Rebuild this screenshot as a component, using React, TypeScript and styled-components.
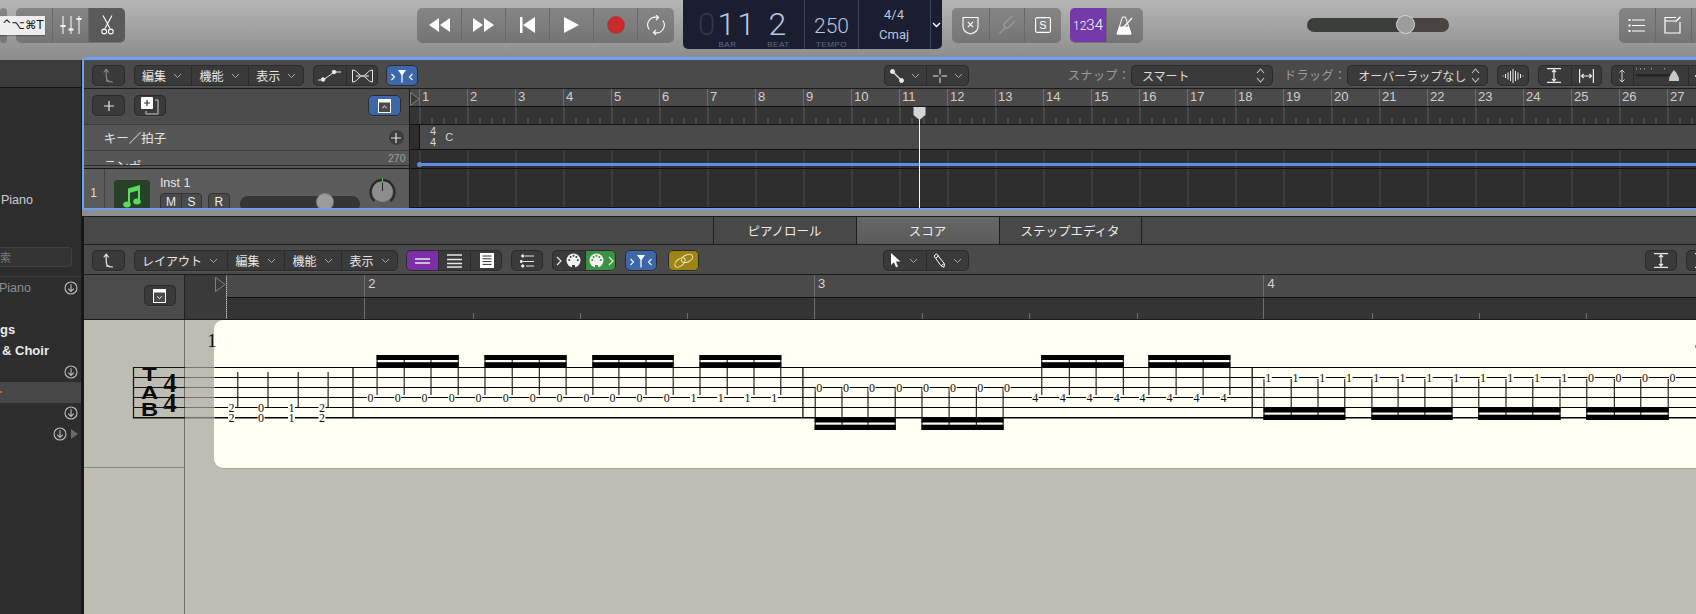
import React from "react";
import styled, { createGlobalStyle } from "styled-components";

const GlobalStyle = createGlobalStyle`
  html, body { margin: 0; padding: 0; background: #2e2e2e; }
  body { font-family: "Liberation Sans", "Noto Sans CJK JP", sans-serif; overflow: hidden; }
  * { box-sizing: border-box; }
`;

const JP = `"Noto Sans CJK JP", "Liberation Sans", sans-serif`;

const Page = styled.div`
  width: 1696px;
  height: 614px;
  position: relative;
  overflow: hidden;
  display: flex;
  flex-direction: column;
`;

/* ---------- top toolbar ---------- */
const TopBar = styled.div`
  height: 57px;
  flex: none;
  display: flex;
  align-items: flex-start;
  overflow: hidden;
  background: linear-gradient(#b6b6b6, #8d8d8d);
`;

const TopGroup = styled.div<{ $ml?: number }>`
  display: flex;
  flex: none;
  height: 34px;
  margin-top: 8px;
  margin-left: ${(p) => p.$ml ?? 0}px;
  border-radius: 5px;
  overflow: hidden;
  background: linear-gradient(#858585, #757575);
  box-shadow: 0 1px 0 rgba(90, 90, 90, 0.6);
`;

const TopSeg = styled.div<{ $w: number; $bg?: string }>`
  width: ${(p) => p.$w}px;
  flex: none;
  display: flex;
  align-items: center;
  justify-content: center;
  color: #fff;
  background: ${(p) => p.$bg ?? "transparent"};
  & + & {
    border-left: 1px solid #696969;
  }
`;

const CountText = styled.span`
  font-family: Roboto, sans-serif;
  font-weight: 300;
  font-size: 15px;
  & small {
    font-size: 12px;
  }
`;

const Tooltip = styled.div`
  position: absolute;
  left: 0;
  top: 16px;
  width: 45px;
  height: 19px;
  background: #eeeeee;
  color: #111;
  font-family: "DejaVu Sans", sans-serif;
  font-size: 11.5px;
  line-height: 19px;
  padding-left: 2px;
  white-space: nowrap;
  box-shadow: 0 1px 1px rgba(0, 0, 0, 0.25);
`;

const Lcd = styled.div`
  margin-left: 9px;
  width: 259.5px;
  height: 49px;
  flex: none;
  display: flex;
  border-radius: 0 0 5px 5px;
  background: #1b1e30;
  color: #b9c6de;
`;

const LcdCell = styled.div<{ $w: number }>`
  width: ${(p) => p.$w}px;
  flex: none;
  display: flex;
  flex-direction: column;
  align-items: center;
  position: relative;
  border-left: 1px solid #3d4460;
`;

const LcdPosition = styled.div`
  width: 121.4px;
  flex: none;
  display: flex;
  padding-left: 19.5px;
`;

const LcdCol = styled.div<{ $w: number }>`
  width: ${(p) => p.$w}px;
  display: flex;
  flex-direction: column;
  align-items: center;
`;

const LcdDigits = styled.div`
  font-family: Roboto, sans-serif;
  font-weight: 300;
  font-size: 32px;
  line-height: 31px;
  margin-top: 9px;
  letter-spacing: 2px;
  white-space: nowrap;
  height: 33px;
`;

const LcdDim = styled.span`
  color: #2f3550;
`;

const LcdLabel = styled.div`
  font-size: 8px;
  line-height: 9px;
  letter-spacing: 0.5px;
  color: #5f6a86;
`;

const LcdTempo = styled.div`
  font-family: Roboto, sans-serif;
  font-size: 21px;
  font-weight: 300;
  line-height: 22px;
  margin-top: 15px;
  height: 27px;
`;

const LcdSmall = styled.div<{ $mt: number }>`
  font-family: Roboto, sans-serif;
  font-size: 13px;
  line-height: 16px;
  margin-top: ${(p) => p.$mt}px;
`;

const LcdChevron = styled.div`
  flex: 1;
  display: flex;
  align-items: center;
  justify-content: center;
  border-left: 1px solid #3d4460;
  color: #fff;
`;

const VolumeTrack = styled.div`
  flex: none;
  margin-top: 18px;
  margin-left: 164.3px;
  width: 142px;
  height: 14px;
  border-radius: 7px;
  position: relative;
  background: linear-gradient(90deg, #3b3f3b 0 68%, #474442 68% 100%);
`;

const VolumeKnob = styled.div`
  position: absolute;
  left: 89px;
  top: -3px;
  width: 19px;
  height: 19px;
  border-radius: 50%;
  background: #9c9c9c;
  border: 1.5px solid #d9d9d9;
`;

/* ---------- body ---------- */
const Body = styled.div`
  flex: 1;
  display: flex;
  min-height: 0;
  background: #8f8f8f;
`;

const Sidebar = styled.div`
  width: 81.5px;
  flex: none;
  margin-top: 2.5px;
  background: #2d2d2d;
  border-right: 1.5px solid #181818;
  color: #d6d6d6;
  font-size: 12.5px;
  display: flex;
  flex-direction: column;
`;

const SideTop = styled.div`
  height: 28.5px;
  flex: none;
  background: #3c3c3c;
  border-bottom: 1px solid #151515;
`;

const SidePiano = styled.div`
  height: 22px;
  margin-top: 101px;
  padding-left: 1px;
  line-height: 22px;
  color: #cfcfcf;
`;

const SideSearch = styled.div`
  height: 20px;
  margin-top: 36px;
  width: 72px;
  border: 1px solid #424242;
  border-left: none;
  border-radius: 0 4px 4px 0;
  background: #333;
  color: #7c7c7c;
  font-family: ${JP};
  font-size: 11px;
  line-height: 18px;
`;

const SideList = styled.div`
  margin-top: 9px;
  border-top: 1px solid #3f3f3f;
  padding-top: 1px;
  display: flex;
  flex-direction: column;
`;

const SideRow = styled.div<{ $selected?: boolean; $dim?: boolean; $bold?: boolean }>`
  height: 20.8px;
  flex: none;
  display: flex;
  align-items: center;
  padding: 0 3px 0 0;
  gap: 4px;
  background: ${(p) => (p.$selected ? "#474747" : "transparent")};
  color: ${(p) => (p.$dim ? "#8f8f8f" : "#ececec")};
  font-weight: ${(p) => (p.$bold ? 600 : 400)};
  font-size: ${(p) => (p.$bold ? 13 : 12.5)}px;
`;

const SideLabel = styled.span<{ $ml?: number }>`
  flex: 1;
  margin-left: ${(p) => p.$ml ?? 0}px;
  white-space: nowrap;
`;

const OrangeMark = styled.span`
  width: 2px;
  height: 2px;
  background: #c8602c;
`;

const Main = styled.div`
  flex: 1;
  min-width: 0;
  display: flex;
  flex-direction: column;
`;

/* ---------- shared dark toolbar parts ---------- */
const DarkBar = styled.div<{ $h: number }>`
  height: ${(p) => p.$h}px;
  flex: none;
  display: flex;
  align-items: flex-start;
  padding-top: 5px;
  overflow: hidden;
  background: #4a4a4a;
  border-bottom: 1px solid #1c1c1c;
`;

const Group = styled.div<{ $ml?: number }>`
  display: flex;
  flex: none;
  height: 21px;
  margin-left: ${(p) => p.$ml ?? 0}px;
  border-radius: 5px;
  overflow: hidden;
  background: #3a3a3a;
  outline: 1px solid #2b2b2b;
  outline-offset: -1px;
  box-shadow: 0 1px 0 #555;
`;

const Seg = styled.div<{ $w: number; $bg?: string; $muted?: boolean; $tight?: boolean; $flush?: boolean }>`
  width: ${(p) => p.$w}px;
  flex: none;
  display: flex;
  align-items: center;
  justify-content: center;
  gap: ${(p) => (p.$tight ? 4 : 7)}px;
  color: ${(p) => (p.$muted ? "#8a8a8a" : "#e8e8e8")};
  background: ${(p) => p.$bg ?? "transparent"};
  font-family: ${JP};
  font-size: 12px;
  white-space: nowrap;
  & + & {
    border-left: ${(p) => (p.$flush ? "none" : "1px solid #2b2b2b")};
  }
`;

const BarLabel = styled.span<{ $ml: number; $w: number }>`
  flex: none;
  margin-left: ${(p) => p.$ml}px;
  width: ${(p) => p.$w}px;
  line-height: 19px;
  font-family: ${JP};
  font-size: 12px;
  letter-spacing: 0.5px;
  color: #9c9c9c;
  white-space: nowrap;
`;

const SelectBox = styled(Group)<{ $w: number }>`
  width: ${(p) => p.$w}px;
  align-items: center;
  justify-content: space-between;
  padding: 0 8px 0 11px;
  color: #dcdcdc;
  font-family: ${JP};
  font-size: 12px;
  white-space: nowrap;
`;

/* ---------- tracks area ---------- */
const TracksPanel = styled.div`
  height: 153px;
  flex: none;
  display: flex;
  flex-direction: column;
  border-top: 3px solid #6fa2ee;
  border-left: 2px solid #6fa2ee;
  border-bottom: 2px solid #6fa2ee;
  border-top-left-radius: 4px;
  background: #3a3a3a;
  overflow: hidden;
`;

const TracksRow = styled.div`
  flex: 1;
  min-height: 0;
  display: flex;
`;

const Header = styled.div`
  width: 326px;
  flex: none;
  display: flex;
  flex-direction: column;
  border-right: 1px solid #1a1a1a;
  background: #555;
`;

const HeaderTop = styled.div`
  height: 36px;
  display: flex;
  align-items: flex-start;
  padding-top: 6px;
  background: #4c4c4c;
  border-bottom: 1px solid #3c3c3c;
`;

const KeyRow = styled.div`
  height: 26px;
  display: flex;
  align-items: center;
  justify-content: space-between;
  padding: 0 5px 0 20.2px;
  font-family: ${JP};
  font-size: 12.5px;
  color: #e4e4e4;
  border-bottom: 1px solid #424242;
  background: #565656;
`;

const PlusDot = styled.div`
  width: 15px;
  height: 15px;
  border-radius: 50%;
  background: #3d3d3d;
  display: flex;
  align-items: center;
  justify-content: center;
`;

const TempoRow = styled.div`
  height: 15px;
  flex: none;
  display: flex;
  justify-content: space-between;
  overflow: hidden;
  padding: 0 3px 0 20.2px;
  font-family: ${JP};
  font-size: 12.5px;
  color: #e4e4e4;
  border-bottom: 1px solid #2c2c2c;
  background: #565656;
`;

const TempoName = styled.span`
  line-height: 29px;
`;

const TempoMax = styled.span`
  font-family: "Liberation Sans", sans-serif;
  font-size: 10.5px;
  line-height: 14px;
  color: #a0a0a0;
`;

const TrackRow = styled.div`
  flex: 1;
  min-height: 0;
  margin-top: 2px;
  display: flex;
  overflow: hidden;
  background: #5b5b5b;
  border-top: 1px solid #161616;
`;

const TrackNumber = styled.div`
  width: 21px;
  flex: none;
  text-align: center;
  padding-top: 17px;
  font-size: 12px;
  line-height: 14px;
  color: #ddd;
  border-right: 1px solid #444;
`;

const TrackIcon = styled.div`
  width: 36.4px;
  height: 36px;
  flex: none;
  margin: 11px 0 0 9.5px;
  border-radius: 3px;
  background: #274229;
  display: flex;
  justify-content: center;
  padding-top: 4px;
`;

const TrackBody = styled.div`
  width: 198px;
  flex: none;
  margin-left: 9.5px;
  padding-top: 7px;
`;

const TrackName = styled.div`
  font-size: 12.5px;
  line-height: 14px;
  color: #e6e6e6;
`;

const TrackControls = styled.div`
  margin-top: 3px;
  display: flex;
  align-items: flex-start;
`;

const MiniGroup = styled.div<{ $ml?: number }>`
  display: flex;
  flex: none;
  height: 20px;
  margin-left: ${(p) => p.$ml ?? 0}px;
  border: 1px solid #333;
  border-radius: 4px;
  background: #4a4a4a;
`;

const MiniBtn = styled.div`
  width: 20px;
  font-size: 12px;
  line-height: 17px;
  text-align: center;
  color: #eee;
  & + & {
    border-left: 1px solid #333;
  }
`;

const TrackSlider = styled.div`
  flex: none;
  width: 120px;
  height: 16px;
  margin: 3px 0 0 10px;
  border-radius: 8px;
  background: #333633;
  position: relative;
`;

const TrackKnob = styled.div`
  position: absolute;
  left: 76.5px;
  top: -3px;
  width: 18px;
  height: 18px;
  border-radius: 50%;
  background: #9b9b9b;
  border: 1px solid #7c7c7c;
`;

const PanKnob = styled.div`
  flex: none;
  margin: 9px 0 0 11px;
  width: 27px;
  height: 27px;
`;

const Lanes = styled.div`
  flex: 1;
  min-width: 0;
  display: flex;
  flex-direction: column;
  position: relative;
  background: #2e2e2e;
`;

const RulerBars = styled.div`
  height: 18px;
  flex: none;
  display: flex;
  padding-left: 9.5px;
  background: #4a4a4a;
  border-bottom: 1px solid #111;
`;

const StartFlag = styled.svg<{ $left: number; $top: number }>`
  position: absolute;
  left: ${(p) => p.$left}px;
  top: ${(p) => p.$top}px;
`;

const RulerBar = styled.div`
  width: 48px;
  flex: none;
  border-left: 1px solid #6f6f6f;
  padding-left: 2px;
  font-size: 13px;
  line-height: 16px;
  color: #cfcfcf;
`;

const RulerTicks = styled.div`
  height: 18px;
  flex: none;
  background-color: #343434;
  background-image:
    linear-gradient(90deg, #5c5c5c 1px, transparent 1px),
    linear-gradient(
      90deg,
      transparent 12px,
      #5f5f5f 12px 13px,
      transparent 13px 24px,
      #5f5f5f 24px 25px,
      transparent 25px 36px,
      #5f5f5f 36px 37px,
      transparent 37px
    );
  background-size: 48px 100%, 48px 6px;
  background-position: 9.5px 0, 9.5px 100%;
  background-repeat: repeat-x;
  border-bottom: 1px solid #111;
`;

const KeyLane = styled.div`
  height: 25px;
  flex: none;
  padding-left: 9.5px;
  background: #2e2e2e;
  border-bottom: 1px solid #111;
`;

const KeyRegion = styled.div`
  height: 100%;
  display: flex;
  align-items: center;
  gap: 9px;
  padding-left: 10px;
  background: #4a4a4a;
  border-left: 1px solid #111;
  color: #d5d5d5;
  font-size: 11px;
`;

const TimeSig = styled.div`
  font-size: 11px;
  line-height: 11.5px;
  text-align: center;
  font-weight: 400;
`;

const GridLane = styled.div<{ $h?: number }>`
  ${(p) => (p.$h ? `height: ${p.$h}px; flex: none;` : "flex: 1;")}
  position: relative;
  background-color: #2e2e2e;
  background-image: linear-gradient(90deg, #4a4a4a 1px, transparent 1px);
  background-size: 48px 100%;
  background-position: 9.5px 0;
  border-bottom: 1px solid #111;
`;

const TempoLine = styled.div`
  position: absolute;
  left: 9.5px;
  right: 0;
  top: 13px;
  height: 3px;
  background: #5b8fe6;
  &::before {
    content: "";
    position: absolute;
    left: -2.5px;
    top: -1px;
    width: 5px;
    height: 5px;
    border-radius: 50%;
    background: #5b8fe6;
  }
`;

const Playhead = styled.div`
  position: absolute;
  left: 509.3px;
  top: 19px;
  bottom: 0;
  width: 1px;
  background: #f4f4f4;
`;

const PlayheadCap = styled.svg`
  position: absolute;
  left: 503.5px;
  top: 18px;
`;

/* ---------- editor ---------- */
const Gap = styled.div`
  height: 5.5px;
  flex: none;
`;

const Editor = styled.div`
  flex: 1;
  min-height: 0;
  margin-left: 2px;
  display: flex;
  flex-direction: column;
  border-top: 1px solid #1c1c1c;
  background: #bdbdb3;
  position: relative;
  box-shadow: -2px 0 0 #181818;
`;

const Tabs = styled.div`
  height: 28.5px;
  flex: none;
  display: flex;
  padding-left: 629px;
  background: #484848;
  border-bottom: 1px solid #1f1f1f;
`;

const Tab = styled.div<{ $active?: boolean }>`
  width: 143px;
  flex: none;
  display: flex;
  align-items: center;
  justify-content: center;
  font-family: ${JP};
  font-size: 12.5px;
  color: #ececec;
  border-left: 1px solid #1f1f1f;
  background: ${(p) => (p.$active ? "linear-gradient(#676767,#5a5a5a)" : "transparent")};
  &:last-child {
    border-right: 1px solid #1f1f1f;
  }
`;

const ScoreRuler = styled.div`
  height: 45px;
  flex: none;
  display: flex;
  border-bottom: 1px solid #1a1a1a;
`;

const RulerSide = styled.div`
  width: 101px;
  flex: none;
  padding: 10px 0 0 60px;
  background: #4b4b4b;
  border-right: 1px solid #222;
`;

const SquareBtn = styled(Group)`
  width: 32.2px;
  align-items: center;
  justify-content: center;
`;

const RulerPad = styled.div`
  width: 41.5px;
  flex: none;
  position: relative;
  background: #3a3a3a;
`;

const RulerTrack = styled.div`
  flex: 1;
  min-width: 0;
  display: flex;
  flex-direction: column;
  border-left: 1px dotted #7a7a7a;
`;

const RulerTrackTop = styled.div`
  height: 22.5px;
  flex: none;
  display: flex;
  padding-left: 137.3px;
  background: #4a4a4a;
  border-bottom: 1px solid #111;
`;

const RulerTrackBottom = styled.div`
  flex: 1;
  display: flex;
  padding-left: 137.3px;
  background: #343434;
`;

const ScoreBar = styled.div`
  width: 449.6px;
  flex: none;
  border-left: 1px solid #6f6f6f;
  padding: 2px 0 0 3px;
  font-size: 13px;
  line-height: 14px;
  color: #d4d4d4;
`;

const ScoreBeats = styled.div`
  width: 449.6px;
  flex: none;
  display: flex;
  border-left: 1px solid #6f6f6f;
`;

const ScoreBeat = styled.div`
  width: 107.3px;
  flex: none;
  & + & {
    background: linear-gradient(#6a6a6a, #6a6a6a) left bottom / 1px 6px no-repeat;
  }
`;

const ScoreArea = styled.div`
  flex: 1;
  min-height: 0;
  display: flex;
  position: relative;
  background: #bdbdb3;
`;

const ScoreSide = styled.div`
  width: 101px;
  flex: none;
  border-right: 1px solid #6f6f6c;
`;

const ScoreSideTop = styled.div`
  height: 148px;
  border-bottom: 1px solid #8a8a84;
`;

const PaperCol = styled.div`
  flex: 1;
  min-width: 0;
  padding-left: 29px;
`;

const Paper = styled.div`
  height: 148px;
  background: #fffff4;
  border-radius: 9px 0 0 9px;
  box-shadow: 0 1px 0 #a9a99f;
`;

const ScoreSvg = styled.svg`
  position: absolute;
  left: 0;
  top: 0;
`;

/* ---------- icons ---------- */
const Chev = () => (
  <svg width="9" height="6" viewBox="0 0 9 6" fill="none" stroke="#a8a8a8" strokeWidth="1">
    <path d="M1 1l3.5 3.5L8 1" />
  </svg>
);

const UpDown = () => (
  <svg width="9" height="15" viewBox="0 0 9 15" fill="none" stroke="#c4c4c4" strokeWidth="1.1">
    <path d="M1 5l3.5-4L8 5M1 10l3.5 4L8 10" />
  </svg>
);

const Ico = ({ w, h, children, sw = 1.2 }: { w: number; h: number; sw?: number; children: React.ReactNode }) => (
  <svg width={w} height={h} viewBox={`0 0 ${w} ${h}`} fill="none" stroke="currentColor" strokeWidth={sw}>
    {children}
  </svg>
);

const BackArrow = () => (
  <Ico w={12} h={15}>
    <path d="M4 13.5c0-3-.8-3.4-.8-6V1.5M1 4l2.2-2.8L5.4 4M4.5 12.5c1 1.2 2 1.5 5 1.5" strokeLinecap="round" />
  </Ico>
);

const DownloadDot = () => (
  <svg width="14" height="14" viewBox="0 0 14 14" fill="none" stroke="#bdbdbd" strokeWidth="1.1">
    <circle cx="7" cy="7" r="6" />
    <path d="M7 3.2v7M4.2 7.6L7 10.4l2.8-2.8" />
  </svg>
);

const MidiPlug = ({ fill }: { fill: string }) => (
  <svg width="15" height="15" viewBox="0 0 15 15">
    <circle cx="7.5" cy="7.5" r="7" fill="#f2f2f2" />
    <g fill={fill}>
      <circle cx="3.2" cy="7" r="1" />
      <circle cx="4.6" cy="4" r="1" />
      <circle cx="7.5" cy="2.8" r="1" />
      <circle cx="10.4" cy="4" r="1" />
      <circle cx="11.8" cy="7" r="1" />
      <rect x="6" y="12" width="3" height="3" />
    </g>
  </svg>
);

const FunnelIcon = () => (
  <svg width="24" height="14" viewBox="0 0 24 14" fill="none" stroke="#fff" strokeWidth="1.1">
    <path d="M1.5 5l3 3-3 3M22.5 5l-3 3 3 3" />
    <path d="M8 1h8l-3.400 5v7.500h-1.200V6z" fill="#fff" stroke="none" />
  </svg>
);

const FitV = () => (
  <Ico w={14} h={15}>
    <path d="M0 .6h14M0 14.4h14" />
    <path d="M7 2v11M5 4.2L7 2l2 2.2M5 10.8L7 13l2-2.2" />
  </Ico>
);

const FitH = () => (
  <Ico w={15} h={14}>
    <path d="M.6 0v14M14.4 0v14" />
    <path d="M2.5 7h10M4.6 5L2.5 7l2.1 2M10.4 5l2.1 2-2.1 2" />
  </Ico>
);

const CollapseBox = ({ up }: { up: boolean }) => (
  <svg width="13" height="14" viewBox="0 0 13 14" fill="none">
    <rect x=".5" y=".5" width="12" height="13" stroke="#fff" fill="#4a4a4a" />
    <rect x=".5" y=".5" width="12" height="3" fill="#fff" />
    <path d={up ? "M4.2 9.2l2.3-2.2 2.3 2.2" : "M4.2 7.4l2.3 2.2 2.3-2.2"} stroke="#fff" />
  </svg>
);

/* ---------- score data ---------- */
const PAPER = "#fffff4";

const bar1 = [
  { x: 237.3, tx: 231, d: "2" },
  { x: 267.5, tx: 260.6, d: "0" },
  { x: 297.7, tx: 291, d: "1" },
  { x: 327.6, tx: 321.5, d: "2" },
];

const bar2Stems = [376.6, 403.7, 430.5, 457.7, 484.5, 511.7, 538.8, 565.6, 592.4, 618.4, 645.5, 672.7, 699.5, 726.7, 753.5, 780.3];
const bar3Stems = [814.7, 841.5, 867.5, 894.7, 921.5, 948.6, 975.8, 1002.6];
const bar3bStems = [1041.3, 1068.8, 1095.6, 1122.8, 1148.4, 1175.6, 1202.6, 1229.4];
const bar4Stems = [1263.5, 1290.7, 1317.5, 1344.3, 1371.4, 1397.6, 1424.4, 1451.5, 1478.3, 1505.5, 1532.3, 1559.5, 1586.3, 1613.8, 1640.3, 1667.7];

const groupsOf = (stems: number[]) => {
  const out: number[][] = [];
  for (let i = 0; i < stems.length; i += 4) out.push(stems.slice(i, i + 4));
  return out;
};

const Digit = ({ x, y, d }: { x: number; y: number; d: string }) => (
  <g>
    <rect x={x - 3.5} y={y - 4} width={7} height={8} fill={PAPER} />
    <text x={x} y={y + 4} fontFamily="'Liberation Serif', serif" fontSize="12" textAnchor="middle" fill="#111">
      {d}
    </text>
  </g>
);

const Beamed = ({ stems, y1, y2, beamTop, digitY, digits, dx }: {
  stems: number[];
  y1: number;
  y2: number;
  beamTop: number;
  digitY: number;
  digits: string[];
  dx: number;
}) => (
  <g>
    {groupsOf(stems).map((g, i) => (
      <g key={i}>
        <rect x={g[0] - 0.5} y={beamTop} width={g[3] - g[0] + 1} height={5} fill="#000" />
        <rect x={g[0] - 0.5} y={beamTop + 7.2} width={g[3] - g[0] + 1} height={5.3} fill="#000" />
      </g>
    ))}
    {stems.map((x, i) => (
      <g key={x}>
        <line x1={x} x2={x} y1={y1} y2={y2} stroke="#000" strokeWidth="1" />
        <Digit x={x + dx} y={digitY} d={digits[i]} />
      </g>
    ))}
  </g>
);

const staffY = [367.5, 377.5, 387.5, 397.5, 407.5];

const ScoreDrawing = () => (
  <ScoreSvg width="1612.5" height="294" viewBox="83.5 320 1612.5 294">
    {staffY.map((y) => (
      <g key={y}>
        <line x1="132.8" x2="184.5" y1={y} y2={y} stroke="#111" />
        <line x1="184.5" x2="214" y1={y} y2={y} stroke="#77776f" />
        <line x1="214" x2="1696" y1={y} y2={y} stroke="#000" />
      </g>
    ))}
    <line x1="132.8" x2="184.5" y1="417.7" y2="417.7" stroke="#111" strokeWidth="1.6" />
    <line x1="184.5" x2="214" y1="417.7" y2="417.7" stroke="#77776f" strokeWidth="1.6" />
    <line x1="214" x2="1696" y1="417.7" y2="417.7" stroke="#000" strokeWidth="1.6" />
    <line x1="133" x2="133" y1="367" y2="418.5" stroke="#111" strokeWidth="1.2" />

    <g transform="translate(149 0) scale(1.25 1)" fontFamily="'Liberation Sans', sans-serif" fontWeight="700" fontSize="19" textAnchor="middle" fill="#0b0b0b">
      <text x="0" y="381">T</text>
      <text x="0" y="399">A</text>
      <text x="0" y="416">B</text>
    </g>
    <g fontFamily="'Liberation Serif', serif" fontWeight="700" fontSize="27" textAnchor="middle" fill="#0b0b0b">
      <text x="169.5" y="392">4</text>
      <text x="169.5" y="412">4</text>
    </g>

    <text x="211.6" y="347" fontFamily="'Liberation Serif', serif" fontSize="19" textAnchor="middle" fill="#111">1</text>
    <rect x="1694.5" y="345" width="1.5" height="3" fill="#c98a3a" />

    {[352.5, 802.4, 1251.7].map((x) => (
      <line key={x} x1={x} x2={x} y1="367" y2="418" stroke="#000" strokeWidth="1.2" />
    ))}

    {bar1.map((n) => (
      <g key={n.x}>
        <line x1={n.x} x2={n.x} y1="372" y2="408" stroke="#000" />
        <Digit x={n.tx} y={407.5} d={n.d} />
        <Digit x={n.tx} y={417.5} d={n.d} />
      </g>
    ))}

    <Beamed
      stems={bar2Stems}
      y1={355}
      y2={395}
      beamTop={355}
      digitY={397.5}
      dx={-6.5}
      digits={bar2Stems.map((_, i) => (i < 12 ? "0" : "1"))}
    />
    <Beamed
      stems={bar3Stems}
      y1={388}
      y2={430}
      beamTop={417.5}
      digitY={387.5}
      dx={4}
      digits={bar3Stems.map(() => "0")}
    />
    <Beamed
      stems={bar3bStems}
      y1={355}
      y2={395}
      beamTop={355}
      digitY={397.5}
      dx={-6.5}
      digits={bar3bStems.map(() => "4")}
    />
    <Beamed
      stems={bar4Stems}
      y1={379}
      y2={420}
      beamTop={407.5}
      digitY={377.5}
      dx={4.3}
      digits={bar4Stems.map((_, i) => (i < 12 ? "1" : "0"))}
    />
  </ScoreSvg>
);

const rulerBars = Array.from({ length: 27 }, (_, i) => i + 1);

export default function App() {
  return (
    <Page>
      <GlobalStyle />
      <TopBar>
        <TopGroup>
          <TopSeg $w={6.5} />
        </TopGroup>
        <TopGroup $ml={9.5}>
          <TopSeg $w={36.4} />
          <TopSeg $w={36}>
            <Ico w={22} h={18} sw={1}>
              <path d="M3 0v18M11 0v18M19 0v18" />
              <path d="M.5 10h5M8.500 13.500h5M16.500 3h5" strokeWidth="2" />
            </Ico>
          </TopSeg>
          <TopSeg $w={36.6} $bg="#5a5a5a">
            <svg width="13" height="20" viewBox="0 0 13 20" fill="none" stroke="#fff" strokeWidth="1.1">
              <path d="M2 .5l7 13M11 .5l-7 13" />
              <circle cx="3.2" cy="16.5" r="2.4" />
              <circle cx="9.8" cy="16.5" r="2.4" />
            </svg>
          </TopSeg>
        </TopGroup>
        <TopGroup $ml={292}>
          <TopSeg $w={44.5}>
            <svg width="21" height="14" viewBox="0 0 21 14" fill="#fff">
              <path d="M10 0v14L0 7zM21 0v14L11 7z" />
            </svg>
          </TopSeg>
          <TopSeg $w={44}>
            <svg width="21" height="14" viewBox="0 0 21 14" fill="#fff">
              <path d="M0 0v14l10-7zM11 0v14l10-7z" />
            </svg>
          </TopSeg>
          <TopSeg $w={44}>
            <svg width="15" height="16" viewBox="0 0 15 16" fill="#fff">
              <rect x="0" y="0" width="2.5" height="16" />
              <path d="M15 0v16L3 8z" />
            </svg>
          </TopSeg>
          <TopSeg $w={44}>
            <svg width="15" height="16" viewBox="0 0 15 16" fill="#fff">
              <path d="M0 0v16l15-8z" />
            </svg>
          </TopSeg>
          <TopSeg $w={44}>
            <svg width="18" height="18" viewBox="0 0 18 18">
              <circle cx="9" cy="9" r="8.5" fill="#c92a2a" stroke="#8e3a3a" strokeWidth=".6" />
            </svg>
          </TopSeg>
          <TopSeg $w={36.5}>
            <svg width="20" height="20" viewBox="0 0 20 20" fill="none" stroke="#fff" strokeWidth="1.1">
              <path d="M3.2 14.5A7.8 7.8 0 0 1 11.5 2.4M16.8 5.5A7.8 7.8 0 0 1 8.5 17.6" />
              <path d="M10 0l2.6 2.5L10 5M10 15l-2.6 2.6L10 20" />
            </svg>
          </TopSeg>
        </TopGroup>

        <Lcd>
          <LcdPosition>
            <LcdCol $w={50}>
              <LcdDigits>
                <LcdDim>0</LcdDim>11
              </LcdDigits>
              <LcdLabel>BAR</LcdLabel>
            </LcdCol>
            <LcdCol $w={52}>
              <LcdDigits>2</LcdDigits>
              <LcdLabel>BEAT</LcdLabel>
            </LcdCol>
          </LcdPosition>
          <LcdCell $w={53.2}>
            <LcdTempo>250</LcdTempo>
            <LcdLabel>TEMPO</LcdLabel>
          </LcdCell>
          <LcdCell $w={72}>
            <LcdSmall $mt={7}>4/4</LcdSmall>
            <LcdSmall $mt={4}>Cmaj</LcdSmall>
          </LcdCell>
          <LcdChevron>
            <svg width="9" height="6" viewBox="0 0 9 6" fill="none" stroke="#fff" strokeWidth="1.4">
              <path d="M1 1l3.5 3.5L8 1" />
            </svg>
          </LcdChevron>
        </Lcd>

        <TopGroup $ml={9.5}>
          <TopSeg $w={37}>
            <svg width="17" height="19" viewBox="0 0 17 19" fill="none" stroke="#fff" strokeWidth="1.1">
              <path d="M1 1.5h15v9c0 4-3.5 6.5-7.500 7.500C4.500 17 1 14.500 1 10.500z" />
              <path d="M5.800 5.800l5.400 5.400M11.200 5.800l-5.400 5.400" />
            </svg>
          </TopSeg>
          <TopSeg $w={35}>
            <svg width="18" height="20" viewBox="0 0 18 20" fill="none" stroke="#9a9a9a" strokeWidth="1.4">
              <path d="M14 1L6.500 8.500Q5 10 7 12Q9 14 10.500 12.500L17 6M7.500 12.500L1.500 18.500" />
            </svg>
          </TopSeg>
          <TopSeg $w={37}>
            <svg width="16" height="16" viewBox="0 0 16 16" fill="none" stroke="#fff" strokeWidth="1.1">
              <rect x=".6" y=".6" width="14.800" height="14.800" rx="1.500" />
              <text x="8" y="12" textAnchor="middle" fontFamily="'Liberation Sans', sans-serif" fontSize="11" fill="#fff" stroke="none">S</text>
            </svg>
          </TopSeg>
        </TopGroup>
        <TopGroup $ml={9}>
          <TopSeg $w={36} $bg="#7339a8">
            <CountText>
              <small>12</small>34
            </CountText>
          </TopSeg>
          <TopSeg $w={36.7}>
            <svg width="17" height="19" viewBox="0 0 17 19" fill="none" stroke="#fff" strokeWidth="1">
              <path d="M6.500 1h3L15 18H1z" />
              <path d="M3.800 11h8.800L15 18H1z" fill="#fff" />
              <path d="M5 14L16 2" strokeWidth="1.200" />
            </svg>
          </TopSeg>
        </TopGroup>
        <VolumeTrack>
          <VolumeKnob />
        </VolumeTrack>
        <TopGroup $ml={170}>
          <TopSeg $w={36}>
            <svg width="17" height="15" viewBox="0 0 17 15" fill="none" stroke="#fff" strokeWidth="1.1">
              <path d="M4 2h13M4 7.500h13M4 13h13" />
              <path d="M.5 2h2M.5 7.500h2M.5 13h2" strokeWidth="2" />
            </svg>
          </TopSeg>
          <TopSeg $w={36}>
            <svg width="18" height="18" viewBox="0 0 18 18" fill="none" stroke="#fff" strokeWidth="1.200">
              <path d="M12 1.500H1v15.500h15V6M1 5h12" />
              <path d="M16.500 .8L12 5.300" strokeWidth="1.500" />
            </svg>
          </TopSeg>
          <TopSeg $w={36} />
        </TopGroup>
      </TopBar>
      <Tooltip>^⌥⌘T</Tooltip>

      <Body>
        <Sidebar>
          <SideTop />
          <SidePiano>Piano</SidePiano>
          <SideSearch>索</SideSearch>
          <SideList>
            <SideRow $dim>
              <SideLabel $ml={-1}>Piano</SideLabel>
              <DownloadDot />
            </SideRow>
            <SideRow />
            <SideRow $bold>
              <SideLabel>gs</SideLabel>
            </SideRow>
            <SideRow $bold>
              <SideLabel $ml={2}>&amp; Choir</SideLabel>
            </SideRow>
            <SideRow>
              <SideLabel />
              <DownloadDot />
            </SideRow>
            <SideRow $selected>
              <OrangeMark />
            </SideRow>
            <SideRow>
              <SideLabel />
              <DownloadDot />
            </SideRow>
            <SideRow>
              <SideLabel />
              <DownloadDot />
              <svg width="7" height="10" viewBox="0 0 7 10" fill="#6a6a6a">
                <path d="M0 0v10l7-5z" />
              </svg>
            </SideRow>
          </SideList>
        </Sidebar>

        <Main>
          <TracksPanel>
            <DarkBar $h={29}>
              <Group $ml={8.5}>
                <Seg $w={33} $muted>
                  <BackArrow />
                </Seg>
              </Group>
              <Group $ml={8.5}>
                <Seg $w={57}>編集 <Chev /></Seg>
                <Seg $w={57}>機能 <Chev /></Seg>
                <Seg $w={56.5}>表示 <Chev /></Seg>
              </Group>
              <Group $ml={9.4}>
                <Seg $w={32.2}>
                  <Ico w={23} h={12} sw={1}>
                    <path d="M0 10h3M6.500 9L15 3M18 2h5" />
                    <circle cx="5" cy="9.500" r="1.800" fill="currentColor" />
                    <circle cx="16" cy="2" r="1.800" fill="currentColor" />
                  </Ico>
                </Seg>
                <Seg $w={32.1}>
                  <Ico w={21} h={14} sw={1}>
                    <path d="M.5 1C5 1 7 7 10.500 7S16 1 20.500 1M.5 13C5 13 7 7 10.500 7S16 13 20.500 13M.5 1v12M20.500 1v12" />
                    <path d="M5 6v2M7 5.500v3M14 5.500v3M16 6v2" />
                  </Ico>
                </Seg>
              </Group>
              <Group $ml={8.8}>
                <Seg $w={31.5} $bg="#3c67a8">
                  <FunnelIcon />
                </Seg>
              </Group>
              <Group $ml={465.6}>
                <Seg $w={42.4}>
                  <Ico w={14} h={14} sw={1}>
                    <path d="M2.500 2.500l9 9" strokeWidth="1.200" />
                    <circle cx="2.500" cy="2.500" r="2" fill="currentColor" />
                    <circle cx="11.500" cy="11.500" r="2" fill="currentColor" />
                  </Ico>
                  <Chev />
                </Seg>
                <Seg $w={43}>
                  <Ico w={14} h={14} sw={1}>
                    <path d="M0 7h5.500M8.500 7h5.500M7 0v5.500M7 8.500v5.500" />
                  </Ico>
                  <Chev />
                </Seg>
              </Group>
              <BarLabel $ml={99} $w={63}>スナップ：</BarLabel>
              <SelectBox $w={141.6}>
                スマート
                <UpDown />
              </SelectBox>
              <BarLabel $ml={11.4} $w={63.4}>ドラッグ：</BarLabel>
              <SelectBox $w={141}>
                オーバーラップなし
                <UpDown />
              </SelectBox>
              <Group $ml={9.1}>
                <Seg $w={31.5}>
                  <svg width="22" height="14" viewBox="0 0 22 14" fill="none" stroke="#e8e8e8" strokeWidth="1">
                    <path d="M1 6.500v1M3.500 5v4M6 3.500v7M8.500 2v10M11 0v14M13.500 2v10M16 3.500v7M18.500 5v4M21 6.500v1" />
                  </svg>
                </Seg>
              </Group>
              <Group $ml={9}>
                <Seg $w={32.6}><FitV /></Seg>
                <Seg $w={31.4}><FitH /></Seg>
              </Group>
              <Group $ml={9}>
                <Seg $w={22}>
                  <svg width="8" height="14" viewBox="0 0 8 14" fill="none" stroke="#cfcfcf" strokeWidth="1">
                    <path d="M4 1v12M1.500 3.500L4 1l2.500 2.500M1.500 10.500L4 13l2.500-2.500" />
                  </svg>
                </Seg>
                <Seg $w={55} $flush>
                  <svg width="50" height="16" viewBox="0 0 50 16" fill="none">
                    <rect x="0" y="6" width="42" height="2.500" rx="1" fill="#242424" />
                    <path d="M33 13c0-3 0-5 5-11 5 6 5 8 5 11z" fill="#c8c8c8" />
                    <path d="M.5 0v1.500M4.500 0v1.500M8.500 0v1.500M15.500 0v1.500M28.500 0v1.500" stroke="#999" />
                  </svg>
                </Seg>
                <Seg $w={22}>
                  <svg width="10" height="10" viewBox="0 0 10 10" fill="none" stroke="#cfcfcf" strokeWidth="1">
                    <path d="M10 5H1M4.500 1.500L1 5l3.500 3.500" />
                  </svg>
                </Seg>
              </Group>
            </DarkBar>
            <TracksRow>
              <Header>
                <HeaderTop>
                  <Group $ml={8.5}>
                    <Seg $w={33}>
                      <Ico w={12} h={12}><path d="M6 1v10M1 6h10" /></Ico>
                    </Seg>
                  </Group>
                  <Group $ml={8.5}>
                    <Seg $w={32.2}>
                      <svg width="18" height="18" viewBox="0 0 18 18" fill="none">
                        <rect x="0" y="0" width="12" height="12" fill="#fff" rx="1" />
                        <path d="M6 3v6M3 6h6" stroke="#333" strokeWidth="1.200" />
                        <path d="M14 3h3v14H5v-3" stroke="#ccc" strokeWidth="1" />
                      </svg>
                    </Seg>
                  </Group>
                  <Group $ml={202.8}>
                    <Seg $w={32.2} $bg="#3c67a8">
                      <CollapseBox up />
                    </Seg>
                  </Group>
                </HeaderTop>
                <KeyRow>
                  キー／拍子
                  <PlusDot>
                    <Ico w={10} h={10}><path d="M5 0v10M0 5h10" /></Ico>
                  </PlusDot>
                </KeyRow>
                <TempoRow>
                  <TempoName>テンポ</TempoName>
                  <TempoMax>270</TempoMax>
                </TempoRow>
                <TrackRow>
                  <TrackNumber>1</TrackNumber>
                  <TrackIcon>
                    <svg width="18" height="24" viewBox="0 0 18 24" fill="#58dc5e">
                      <path d="M5 4.500L17 1v16h-2V6.500L7 8.800V21H5z" />
                      <ellipse cx="4" cy="20.500" rx="3.800" ry="3" />
                      <ellipse cx="14" cy="17.500" rx="3.800" ry="3" />
                    </svg>
                  </TrackIcon>
                  <TrackBody>
                    <TrackName>Inst 1</TrackName>
                    <TrackControls>
                      <MiniGroup>
                        <MiniBtn>M</MiniBtn>
                        <MiniBtn>S</MiniBtn>
                      </MiniGroup>
                      <MiniGroup $ml={6}>
                        <MiniBtn>R</MiniBtn>
                      </MiniGroup>
                      <TrackSlider>
                        <TrackKnob />
                      </TrackSlider>
                    </TrackControls>
                  </TrackBody>
                  <PanKnob>
                    <svg width="27" height="27" viewBox="0 0 27 27" fill="none">
                      <circle cx="13.500" cy="13.500" r="10.500" fill="#8d8d8d" />
                      <path d="M5.500 23A12 12 0 1 1 21.500 23" stroke="#2a2a2a" strokeWidth="2.400" />
                      <path d="M13.500 1.500v11.500" stroke="#222" strokeWidth="1" />
                      <path d="M13.500 .5v4" stroke="#5fd35f" strokeWidth="1" />
                    </svg>
                  </PanKnob>
                </TrackRow>
              </Header>
              <Lanes>
                <RulerBars>
                  {rulerBars.map((n) => (
                    <RulerBar key={n}>{n}</RulerBar>
                  ))}
                </RulerBars>
                <StartFlag $left={0} $top={3} width="10" height="14" viewBox="0 0 10 14">
                  <path d="M.5.500L9 7 .5 13.500z" fill="#3b3b3b" stroke="#808080" />
                </StartFlag>
                <RulerTicks />
                <KeyLane>
                  <KeyRegion>
                    <TimeSig>4<br />4</TimeSig>
                    C
                  </KeyRegion>
                </KeyLane>
                <GridLane $h={19}>
                  <TempoLine />
                </GridLane>
                <GridLane />
                <Playhead />
                <PlayheadCap width="13" height="13" viewBox="0 0 13 13">
                  <path d="M.5 0h12v8l-6 5-6-5z" fill="#d4d4d4" />
                </PlayheadCap>
              </Lanes>
            </TracksRow>
          </TracksPanel>
          <Gap />
          <Editor>
            <Tabs>
              <Tab>ピアノロール</Tab>
              <Tab $active>スコア</Tab>
              <Tab>ステップエディタ</Tab>
            </Tabs>
            <DarkBar $h={30}>
              <Group $ml={8.5}>
                <Seg $w={33}>
                  <BackArrow />
                </Seg>
              </Group>
              <Group $ml={8.5}>
                <Seg $w={93}>レイアウト <Chev /></Seg>
                <Seg $w={57}>編集 <Chev /></Seg>
                <Seg $w={57}>機能 <Chev /></Seg>
                <Seg $w={57}>表示 <Chev /></Seg>
              </Group>
              <Group $ml={8.8}>
                <Seg $w={31.6} $bg="#7a2fa6">
                  <Ico w={15} h={6} sw={1.5}>
                    <path d="M0 1h15M0 5h15" />
                  </Ico>
                </Seg>
                <Seg $w={32}>
                  <Ico w={15} h={14} sw={1.4}>
                    <path d="M0 1h15M0 5.500h15M0 9.500h15M0 13h15" />
                  </Ico>
                </Seg>
                <Seg $w={32.5}>
                  <svg width="14" height="15" viewBox="0 0 14 15" fill="none">
                    <rect x="0" y="0" width="14" height="15" fill="#fff" />
                    <path d="M2.500 3h9M2.500 5.800h9M2.500 8.600h9M2.500 11.400h9" stroke="#333" strokeWidth="1" />
                  </svg>
                </Seg>
              </Group>
              <Group $ml={9.1}>
                <Seg $w={31.8}>
                  <Ico w={14} h={14} sw={1}>
                    <path d="M5 2h9M3 7.500h11M6 12h8" />
                    <circle cx="2.800" cy="2" r="1.200" fill="currentColor" />
                    <circle cx="1.200" cy="7.500" r="1.200" fill="currentColor" />
                    <circle cx="2.800" cy="12" r="1.200" fill="currentColor" />
                  </Ico>
                </Seg>
              </Group>
              <Group $ml={9.2}>
                <Seg $w={32.2} $tight>
                  <Ico w={6} h={10}><path d="M1 1l4 4-4 4" /></Ico>
                  <MidiPlug fill="#3a3a3a" />
                </Seg>
                <Seg $w={31.7} $bg="#3c9243" $tight $flush>
                  <MidiPlug fill="#3c9243" />
                  <Ico w={6} h={10}><path d="M1 1l4 4-4 4" /></Ico>
                </Seg>
              </Group>
              <Group $ml={9.1}>
                <Seg $w={31.8} $bg="#3c67a8">
                  <FunnelIcon />
                </Seg>
              </Group>
              <Group $ml={10.3}>
                <Seg $w={31.8} $bg="#9d8414">
                  <svg width="21" height="15" viewBox="0 0 21 15" fill="none" stroke="#f1e8c4" strokeWidth="1">
                    <ellipse cx="7" cy="9.500" rx="6" ry="3.500" transform="rotate(-40 7 9.500)" />
                    <ellipse cx="14" cy="5.500" rx="6" ry="3.500" transform="rotate(-25 14 5.500)" />
                  </svg>
                </Seg>
              </Group>
              <Group $ml={184.1}>
                <Seg $w={42.4}>
                  <svg width="11" height="15" viewBox="0 0 11 15" fill="#fff">
                    <path d="M0 0v12l3-2.800 2 5 2-.8-2-5h4.500z" />
                  </svg>
                  <Chev />
                </Seg>
                <Seg $w={43}>
                  <svg width="13" height="15" viewBox="0 0 13 15" fill="none" stroke="#fff" strokeWidth="1">
                    <path d="M1 3L3.500 .8l8 10-.5 3.500-3-1.500z" />
                    <path d="M8 12.800l3-2.200" />
                    <path d="M3 5l3-2.500" />
                  </svg>
                  <Chev />
                </Seg>
              </Group>
              <Group $ml={676}>
                <Seg $w={32.5}><FitV /></Seg>
              </Group>
              <Group $ml={8.5}>
                <Seg $w={32}><FitV /></Seg>
              </Group>
            </DarkBar>
            <ScoreRuler>
              <RulerSide>
                <SquareBtn>
                  <CollapseBox up={false} />
                </SquareBtn>
              </RulerSide>
              <RulerPad>
                <StartFlag $left={30.5} $top={2} width="11" height="15" viewBox="0 0 11 15">
                  <path d="M.5.500L10 7.500.5 14.500z" fill="#3b3b3b" stroke="#808080" />
                </StartFlag>
              </RulerPad>
              <RulerTrack>
                <RulerTrackTop>
                  <ScoreBar>2</ScoreBar>
                  <ScoreBar>3</ScoreBar>
                  <ScoreBar>4</ScoreBar>
                  <ScoreBar />
                </RulerTrackTop>
                <RulerTrackBottom>
                  {[0, 1, 2, 3].map((b) => (
                    <ScoreBeats key={b}>
                      <ScoreBeat />
                      <ScoreBeat />
                      <ScoreBeat />
                      <ScoreBeat />
                    </ScoreBeats>
                  ))}
                </RulerTrackBottom>
              </RulerTrack>
            </ScoreRuler>
            <ScoreArea>
              <ScoreSide>
                <ScoreSideTop />
              </ScoreSide>
              <PaperCol>
                <Paper />
              </PaperCol>
              <ScoreDrawing />
            </ScoreArea>
          </Editor>
        </Main>
      </Body>
    </Page>
  );
}
